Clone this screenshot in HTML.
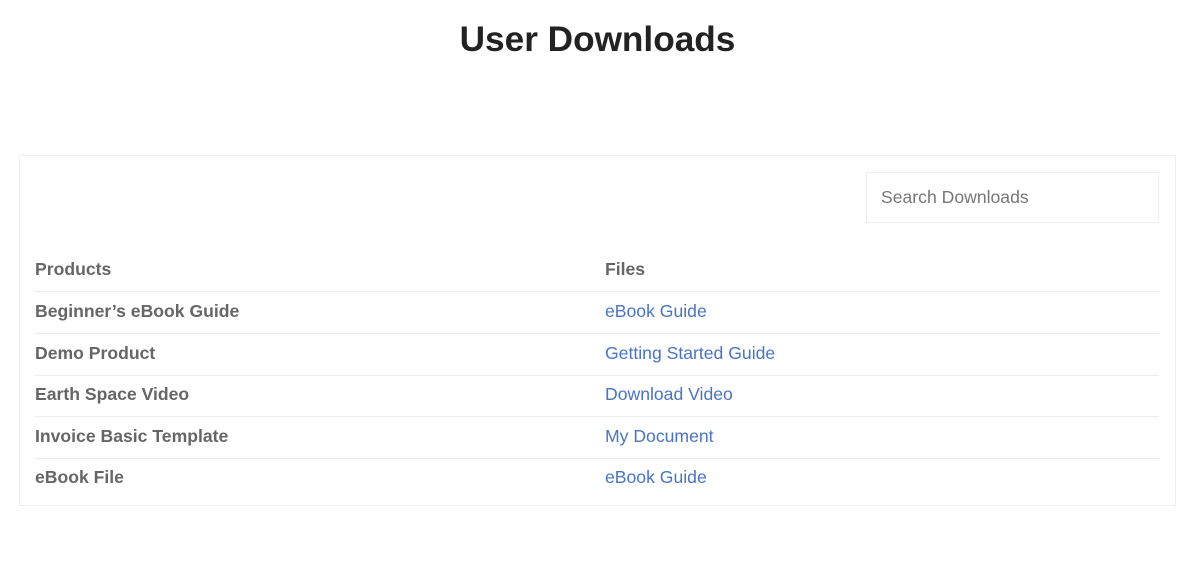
<!DOCTYPE html>
<html><head><style>
body{margin:0;background:#fff;font-family:"Liberation Sans",Arial,sans-serif;width:1200px;height:561px;position:relative;overflow:hidden}
h1{position:absolute;top:18px;left:0;width:1195px;margin:0;text-align:center;font-size:35.2px;line-height:44px;font-weight:bold;color:#222}
.box{position:absolute;left:19px;top:155px;width:1157px;height:351px;border:1px solid #efefef;box-sizing:border-box}
.search{position:absolute;left:866px;top:172px;width:293px;height:51px;border:1px solid #eee;box-sizing:border-box;font-size:17.6px;color:#777;padding-left:14px;line-height:49px}
.row{position:absolute;left:35px;width:1124px;height:41.6px;font-size:17.6px;font-weight:bold;color:#666;line-height:41.6px}
.row.b{border-bottom:1px solid #ececec}
.row span.f{position:absolute;left:570px}
.row a{color:#4a74c2;font-weight:normal;text-decoration:none}
</style></head><body>
<h1>User Downloads</h1>
<div class="box"></div>
<div class="search">Search Downloads</div>
<div class="row b" style="top:249px">Products<span class="f">Files</span></div>
<div class="row b" style="top:291px">Beginner’s eBook Guide<span class="f"><a>eBook Guide</a></span></div>
<div class="row b" style="top:333px">Demo Product<span class="f"><a>Getting Started Guide</a></span></div>
<div class="row b" style="top:374px">Earth Space Video<span class="f"><a>Download Video</a></span></div>
<div class="row b" style="top:416px">Invoice Basic Template<span class="f"><a>My Document</a></span></div>
<div class="row" style="top:457px">eBook File<span class="f"><a>eBook Guide</a></span></div>
</body></html>
